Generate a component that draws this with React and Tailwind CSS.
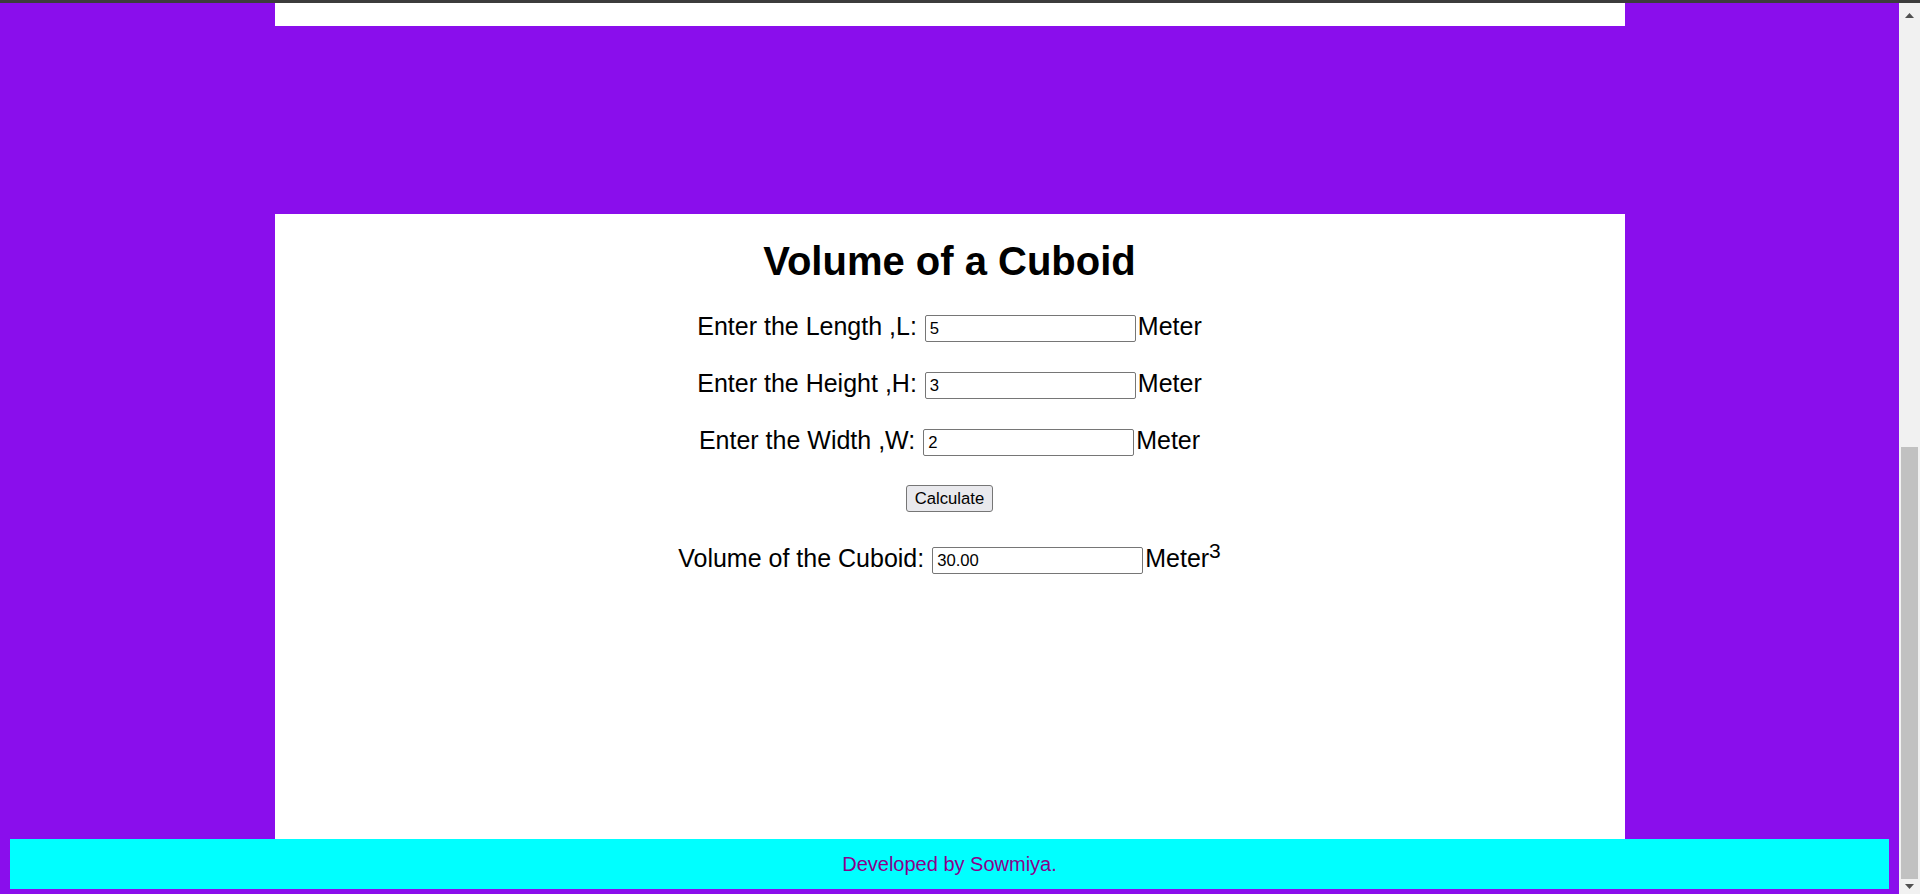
import { useState } from 'react';

// Champ de saisie façon navigateur (zoom 125%)
const Field = ({ value, onChange, readOnly }) => (
    <input
        type="text"
        value={value}
        readOnly={readOnly}
        onChange={onChange}
        className="w-[211px] h-[27px] mt-[5px] ml-[8px] px-[4px] border border-[#767676] rounded-[2px] bg-white text-[16.67px] text-black outline-none"
    />
);

const Row = ({ label, children, unit }) => (
    <div className="flex justify-center h-[32px] text-[25px] leading-[32px] text-black">
        <span>{label}</span>
        {children}
        <span className="ml-[2px]">{unit}</span>
    </div>
);

const Scrollbar = () => (
    <div className="w-[21px] flex flex-col bg-[#f1f1f1]">
        <div className="h-[21px] flex justify-center pt-[10px]">
            <svg width="9" height="5" viewBox="0 0 9 5">
                <polygon points="4.5,0 9,5 0,5" fill="#505050" />
            </svg>
        </div>
        <div className="flex-1 px-[2px]">
            <div className="mt-[423px] h-[432px] bg-[#c1c1c1]"></div>
        </div>
        <div className="h-[15px] flex justify-center pt-[5px]">
            <svg width="9" height="5" viewBox="0 0 9 5">
                <polygon points="0,0 9,0 4.5,5" fill="#505050" />
            </svg>
        </div>
    </div>
);

export default function App() {
    const [length, setLength] = useState('5');
    const [height, setHeight] = useState('3');
    const [width, setWidth] = useState('2');
    const [volume, setVolume] = useState('30.00');

    const calculate = () => {
        const v = parseFloat(length) * parseFloat(height) * parseFloat(width);
        setVolume(isNaN(v) ? '' : v.toFixed(2));
    };

    return (
        <div className="h-[894px] flex flex-col overflow-hidden font-['Liberation_Sans',Arial,sans-serif]">
            <div className="h-[3px] bg-[#3c3c3c]"></div>
            <div className="flex flex-1">
                <div className="relative flex-1 bg-[#8a0eec]">
                    <div className="mx-auto w-[1350px] h-[23px] bg-white"></div>

                    <div className="mx-auto mt-[188px] w-[1350px] h-[675px] bg-white pt-[25px]">
                        <h1 className="text-center text-[40px] leading-[45px] font-bold text-black">Volume of a Cuboid</h1>

                        <div className="mt-[26px] flex flex-col gap-[25px]">
                            <Row label="Enter the Length ,L:" unit="Meter">
                                <Field value={length} onChange={(e) => setLength(e.target.value)} />
                            </Row>
                            <Row label="Enter the Height ,H:" unit="Meter">
                                <Field value={height} onChange={(e) => setHeight(e.target.value)} />
                            </Row>
                            <Row label="Enter the Width ,W:" unit="Meter">
                                <Field value={width} onChange={(e) => setWidth(e.target.value)} />
                            </Row>
                        </div>

                        <div className="mt-[29px] flex justify-center">
                            <button
                                onClick={calculate}
                                className="w-[87px] h-[27px] border border-[#767676] rounded-[3px] bg-[#e9e9ed] text-[16.67px] text-black"
                            >
                                Calculate
                            </button>
                        </div>

                        <div className="mt-[30px]">
                            <Row
                                label="Volume of the Cuboid:"
                                unit={<>Meter<sup className="text-[21px] top-[-0.45em]">3</sup></>}
                            >
                                <Field value={volume} readOnly />
                            </Row>
                        </div>
                    </div>

                    <footer className="absolute left-[10px] right-[10px] bottom-[5px] h-[50px] flex items-center justify-center bg-[#00ffff] text-[20px] text-[#8b008b]">
                        Developed by Sowmiya.
                    </footer>
                </div>
                <Scrollbar />
            </div>
        </div>
    );
}
